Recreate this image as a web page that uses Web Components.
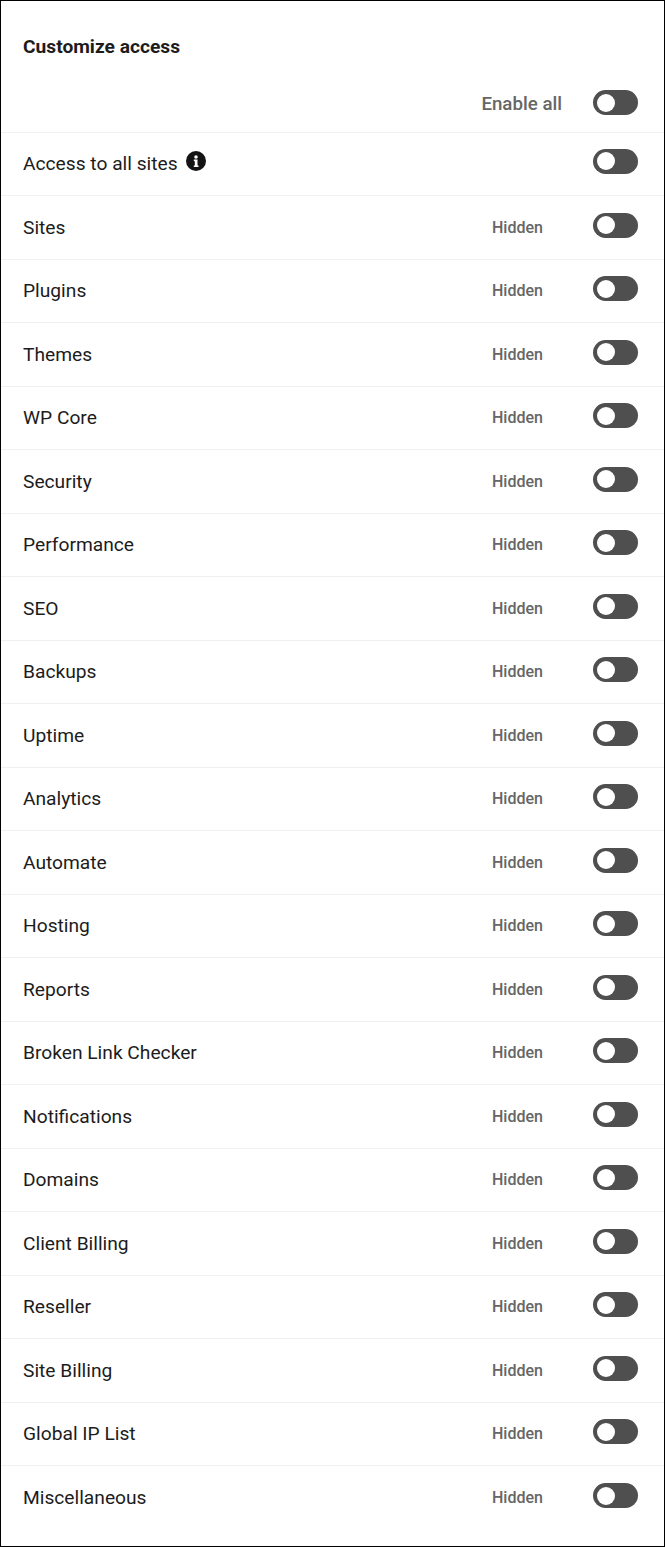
<!DOCTYPE html>
<html>
<head>
<meta charset="utf-8">
<style>
  html, body { margin: 0; padding: 0; background: #fff; }
</style>
</head>
<body>
<access-panel>
  <access-row name="Sites"></access-row>
  <access-row name="Plugins"></access-row>
  <access-row name="Themes"></access-row>
  <access-row name="WP Core"></access-row>
  <access-row name="Security"></access-row>
  <access-row name="Performance"></access-row>
  <access-row name="SEO"></access-row>
  <access-row name="Backups"></access-row>
  <access-row name="Uptime"></access-row>
  <access-row name="Analytics"></access-row>
  <access-row name="Automate"></access-row>
  <access-row name="Hosting"></access-row>
  <access-row name="Reports"></access-row>
  <access-row name="Broken Link Checker"></access-row>
  <access-row name="Notifications"></access-row>
  <access-row name="Domains"></access-row>
  <access-row name="Client Billing"></access-row>
  <access-row name="Reseller"></access-row>
  <access-row name="Site Billing"></access-row>
  <access-row name="Global IP List"></access-row>
  <access-row name="Miscellaneous" last></access-row>
</access-panel>

<script>
class ToggleSwitch extends HTMLElement {
  constructor() {
    super();
    const shadowRoot = this.attachShadow({mode: 'open'});
    shadowRoot.innerHTML = `
  <style>
    :host {
      display: block;
      flex: none;
      width: 45px;
      height: 25px;
      box-sizing: border-box;
      padding: 3.5px 4px;
      border-radius: 12.5px;
      background: #4f4f4f;
    }
    div {
      width: 18px;
      height: 18px;
      border-radius: 50%;
      background: #fff;
    }
  </style>
  <div></div>`;
  }
}
customElements.define('toggle-switch', ToggleSwitch);

class InfoIcon extends HTMLElement {
  constructor() {
    super();
    const shadowRoot = this.attachShadow({mode: 'open'});
    shadowRoot.innerHTML = `
  <style>
    :host { display: block; flex: none; width: 20px; height: 20px; }
    svg { display: block; }
  </style>
  <svg width="20" height="20" viewBox="0 0 20 20">
    <circle cx="10" cy="10" r="10" fill="#141414"/>
    <circle cx="10" cy="6" r="1.8" fill="#fff"/>
    <path d="M7.8 8.6h3.7v5.8h1v1.6H7.8v-1.6h1v-4.2h-1z" fill="#fff"/>
  </svg>`;
  }
}
customElements.define('info-icon', InfoIcon);

class AccessRow extends HTMLElement {
  constructor() {
    super();
    const shadowRoot = this.attachShadow({mode: 'open'});
    const name = this.getAttribute('name');
    shadowRoot.innerHTML = `
  <style>
    :host {
      display: flex;
      align-items: center;
      box-sizing: border-box;
      height: 63.5px;
      padding: 0 26px 0 22px;
      border-bottom: 1px solid #f0f0f0;
      font-family: Roboto, sans-serif;
      font-size: 19.2px;
      color: #1c1c1c;
    }
    :host([last]) { border-bottom: 0; }
    .name { flex: 1; }
    .state {
      width: 101px;
      font-size: 16px;
      font-weight: 500;
      color: #666;
    }
    toggle-switch { margin-bottom: 4px; }
  </style>
  <span class="name">${name}</span>
  <span class="state">Hidden</span>
  <toggle-switch></toggle-switch>`;
  }
}
customElements.define('access-row', AccessRow);

class AccessPanel extends HTMLElement {
  constructor() {
    super();
    const shadowRoot = this.attachShadow({mode: 'open'});
    shadowRoot.innerHTML = `
  <style>
    :host {
      display: block;
      box-sizing: border-box;
      height: 1547px;
      border: 1px solid #000;
      background: #fff;
      font-family: Roboto, sans-serif;
      font-size: 19.2px;
      color: #1c1c1c;
    }
    h1 {
      margin: 0;
      padding: 35px 22px 19px;
      font-size: 19.2px;
      line-height: 21px;
      font-weight: 700;
    }
    .row {
      display: flex;
      align-items: center;
      box-sizing: border-box;
      padding: 0 26px 0 22px;
      border-bottom: 1px solid #f0f0f0;
    }
    .all {
      justify-content: flex-end;
      gap: 31px;
      height: 57px;
      font-size: 18.72px;
      font-weight: 500;
      color: #666;
    }
    .all toggle-switch { margin-bottom: 3px; }
    .sites { height: 63px; gap: 8px; }
    .sites span { margin-bottom: 2px; }
    .sites info-icon { margin-bottom: 6px; }
    .sites toggle-switch { margin-left: auto; margin-bottom: 6px; }
  </style>
  <h1>Customize access</h1>
  <div class="row all"><span>Enable all</span><toggle-switch></toggle-switch></div>
  <div class="row sites"><span>Access to all sites</span><info-icon></info-icon><toggle-switch></toggle-switch></div>
  <slot></slot>`;
  }
}
customElements.define('access-panel', AccessPanel);
</script>
</body>
</html>
